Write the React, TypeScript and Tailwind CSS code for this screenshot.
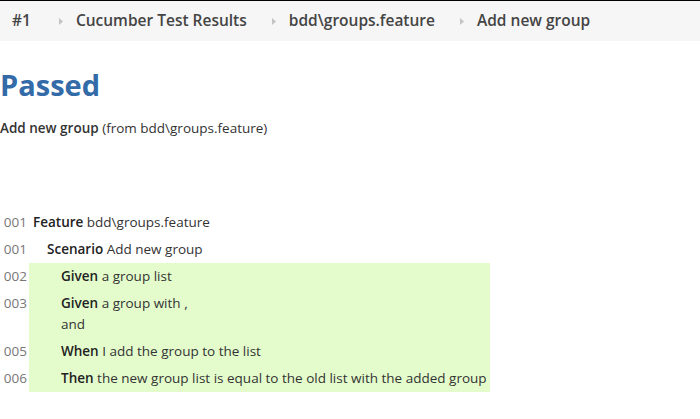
import { Fragment } from 'react';

const crumbs = ['#1', 'Cucumber Test Results', 'bdd\\groups.feature', 'Add new group'];

type Row = { num: string; indent: number; keyword: string; lines: string[]; step?: boolean };

const rows: Row[] = [
  { num: '001', indent: 0, keyword: 'Feature', lines: ['bdd\\groups.feature'] },
  { num: '001', indent: 1, keyword: 'Scenario', lines: ['Add new group'] },
  { num: '002', indent: 2, keyword: 'Given', lines: ['a group list'], step: true },
  { num: '003', indent: 2, keyword: 'Given', lines: ['a group with ,', 'and'], step: true },
  { num: '005', indent: 2, keyword: 'When', lines: ['I add the group to the list'], step: true },
  { num: '006', indent: 2, keyword: 'Then', lines: ['the new group list is equal to the old list with the added group'], step: true },
];

const indents = ['pl-[4px]', 'pl-[18px]', 'pl-[32px]'];

function Caret() {
  return (
    <svg width="4" height="7" viewBox="0 0 4 7" className="shrink-0">
      <path d="M0 0 L4 3.5 L0 7 Z" fill="#c4c4c4" />
    </svg>
  );
}

export default function App() {
  return (
    <div className="min-h-[419px] bg-white text-[#333] font-['Open_Sans',sans-serif]">
      <div className="h-px bg-black" />
      <div className="flex h-[40px] items-center bg-[#f6f6f6] pl-[12px] text-[15.5px] font-semibold text-[#444]">
        {crumbs.map((c, i) => (
          <Fragment key={c}>
            {i > 0 && (
              <span className={`${i === 1 ? 'ml-[28px]' : 'ml-[25px]'} mr-[13px] flex`}>
                <Caret />
              </span>
            )}
            <span>{c}</span>
          </Fragment>
        ))}
      </div>

      <h1 className="mt-[23px] text-[29px] font-bold leading-[42px] text-[#336aa8]">Passed</h1>
      <p className="mt-[12px] text-[13.5px] leading-[20px] text-[#333]">
        <span className="font-semibold">Add new group</span> (from bdd\groups.feature)
      </p>

      <table className="mt-[71px] border-collapse text-[13.5px] leading-[21px]">
        <tbody>
          {rows.map((r, i) => (
            <tr key={i}>
              <td className="w-[29px] py-[3px] pr-[2px] text-right align-top text-[#777]">{r.num}</td>
              <td className={`${indents[r.indent]} py-[3px] pr-[3px] align-top ${r.step ? 'bg-[#e4fccc]' : ''}`}>
                {r.lines.map((l, j) => (
                  <div key={j}>
                    {j === 0 && <span className="font-semibold text-[#222]">{r.keyword} </span>}
                    {l}
                  </div>
                ))}
              </td>
            </tr>
          ))}
        </tbody>
      </table>
    </div>
  );
}
